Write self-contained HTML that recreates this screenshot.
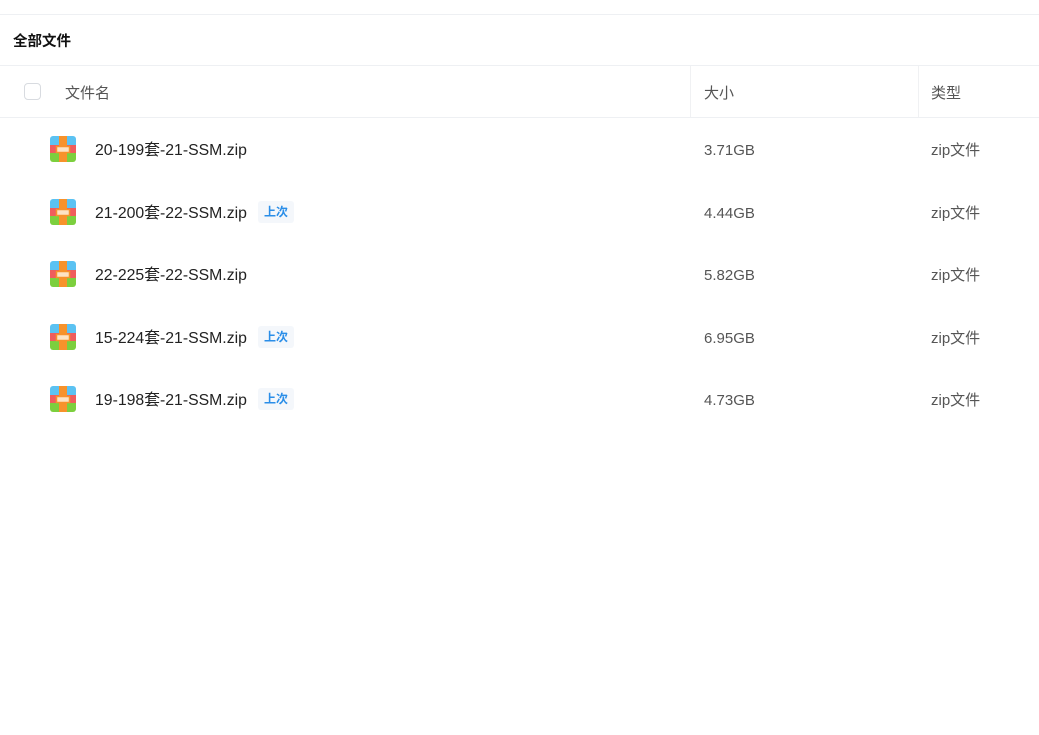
<!DOCTYPE html><html><head><meta charset="utf-8"><style>
body{margin:0;width:1039px;height:735px;background:#fff;font-family:"Liberation Sans","Noto Sans CJK SC",sans-serif;position:relative;overflow:hidden}
.a{position:absolute;line-height:20px;white-space:nowrap}
.l{position:absolute;left:0;width:1039px;height:1px;background:#eef0f3}
.h{font-size:15px;color:#555}
.n{font-size:15.8px;color:#222}
.s{font-size:15px;color:#555}
.tag{font-size:12px;color:#2a8ee8;background:#f4f7fb;padding:1px 6px;border-radius:3px;font-weight:bold}
</style></head><body>
<div class="l" style="top:14px"></div>
<div class="a" style="left:13px;top:32px;font-size:14.5px;font-weight:bold;color:#111">全部文件</div>
<div class="l" style="top:65px"></div>
<div class="l" style="top:117px"></div>
<div class="a" style="left:690px;top:66px;width:1px;height:51px;background:#f0f1f3"></div>
<div class="a" style="left:918px;top:66px;width:1px;height:51px;background:#f0f1f3"></div>
<div class="a" style="left:24px;top:83px;width:15px;height:15px;border:1px solid #d8dbe0;border-radius:4px"></div>
<div class="a h" style="left:65px;top:84px">文件名</div>
<div class="a h" style="left:704px;top:84px">大小</div>
<div class="a h" style="left:931px;top:84px">类型</div>
<svg width="0" height="0" style="position:absolute"><defs><g id="ic">
<clipPath id="c"><rect width="26" height="26" rx="3"/></clipPath>
<g clip-path="url(#c)"><rect width="26" height="9" fill="#5bc2f2"/><rect y="9" width="26" height="8" fill="#ef5d5d"/><rect y="17" width="26" height="9" fill="#7ccf3e"/><rect x="9" width="8" height="26" fill="#f7922b"/></g>
<rect x="6.5" y="10.5" width="13" height="6" fill="#fde3c4" stroke="#f7922b" stroke-width="1.5"/>
</g></defs></svg>
<div class="a" style="left:50px;top:136px"><svg width="26" height="26"><use href="#ic"/></svg></div>
<div class="a n" style="left:95px;top:141px">20-199套-21-SSM.zip</div>
<div class="a s" style="left:704px;top:141px">3.71GB</div><div class="a s" style="left:931px;top:141px">zip文件</div>
<div class="a" style="left:50px;top:199px"><svg width="26" height="26"><use href="#ic"/></svg></div>
<div class="a n" style="left:95px;top:204px">21-200套-22-SSM.zip</div><div class="a tag" style="left:258px;top:201px">上次</div>
<div class="a s" style="left:704px;top:204px">4.44GB</div><div class="a s" style="left:931px;top:204px">zip文件</div>
<div class="a" style="left:50px;top:261px"><svg width="26" height="26"><use href="#ic"/></svg></div>
<div class="a n" style="left:95px;top:266px">22-225套-22-SSM.zip</div>
<div class="a s" style="left:704px;top:266px">5.82GB</div><div class="a s" style="left:931px;top:266px">zip文件</div>
<div class="a" style="left:50px;top:324px"><svg width="26" height="26"><use href="#ic"/></svg></div>
<div class="a n" style="left:95px;top:329px">15-224套-21-SSM.zip</div><div class="a tag" style="left:258px;top:326px">上次</div>
<div class="a s" style="left:704px;top:329px">6.95GB</div><div class="a s" style="left:931px;top:329px">zip文件</div>
<div class="a" style="left:50px;top:386px"><svg width="26" height="26"><use href="#ic"/></svg></div>
<div class="a n" style="left:95px;top:391px">19-198套-21-SSM.zip</div><div class="a tag" style="left:258px;top:388px">上次</div>
<div class="a s" style="left:704px;top:391px">4.73GB</div><div class="a s" style="left:931px;top:391px">zip文件</div>
</body></html>
